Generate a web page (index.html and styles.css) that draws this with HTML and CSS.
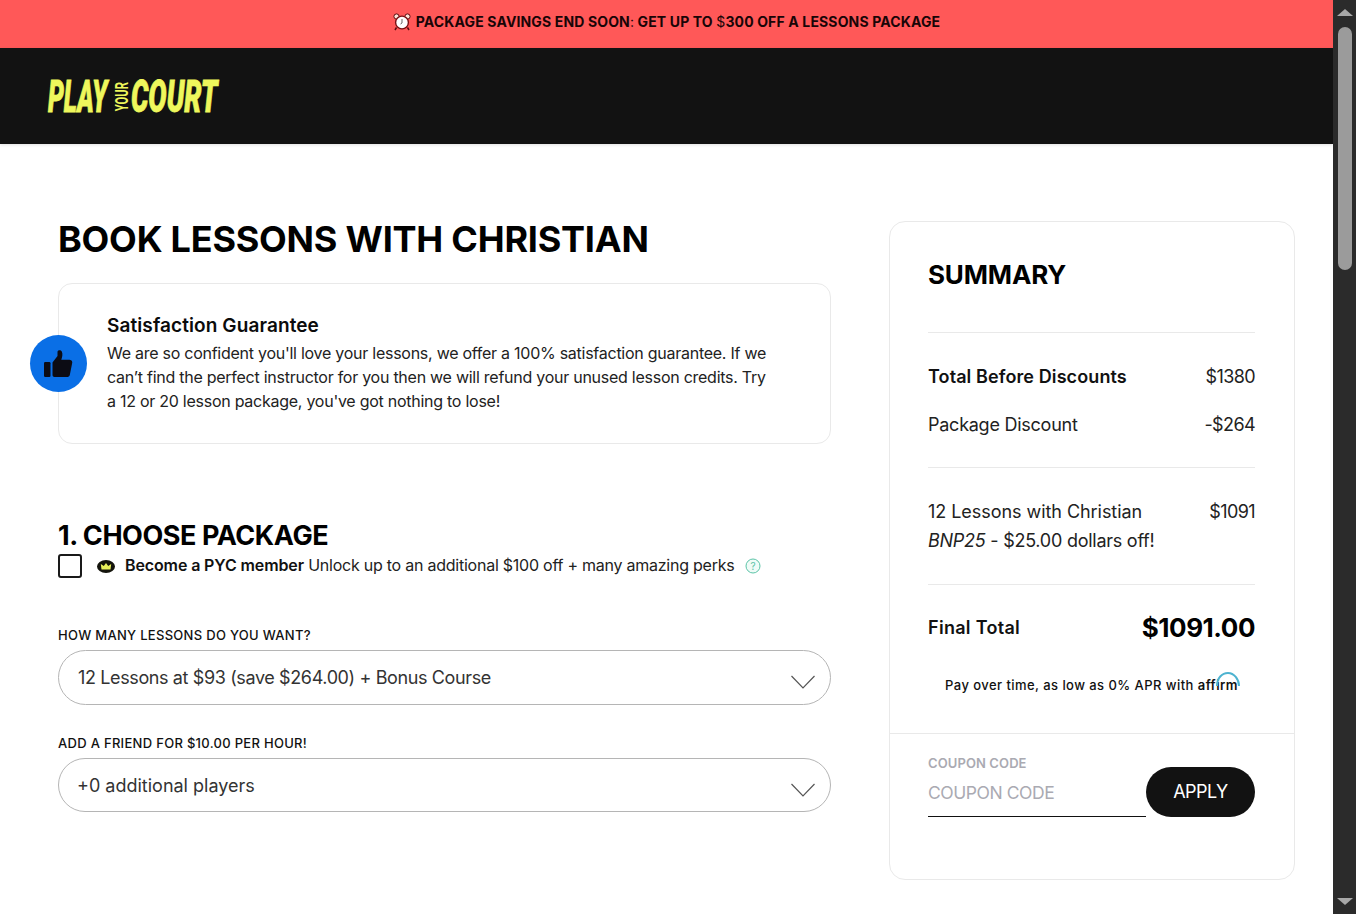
FILE: index.html
```html
<!DOCTYPE html>
<html lang="en">
<head>
<meta charset="utf-8">
<title>Book Lessons</title>
<link rel="stylesheet" href="styles.css">
</head>
<body>
<div class="shell">
  <div class="page">
    <div class="promo">
      <svg class="clock" viewBox="0 0 18 18" width="18" height="18"><circle cx="3.5" cy="3.5" r="2.6" fill="#fbe3d8" stroke="#5a0d10"/><circle cx="14.5" cy="3.5" r="2.6" fill="#fbe3d8" stroke="#5a0d10"/><path d="M3.5 14.5 2 17M14.5 14.5 16 17" stroke="#5a0d10" stroke-width="1.5"/><circle cx="9" cy="9.5" r="6.4" fill="#fff" stroke="#7a1014" stroke-width="1.4"/><path d="M9 6v4l-1.5 1" fill="none" stroke="#555" stroke-width=".9"/></svg>
      <span>PACKAGE SAVINGS END SOON<span class="thin">:</span> GET UP TO <span class="thin">$</span>300 OFF A LESSONS PACKAGE</span>
    </div>
    <header class="topbar">
      <div class="logo"><span class="logo-word play">PLAY</span><span class="logo-your">YOUR</span><span class="logo-word court">COURT</span></div>
    </header>
    <main class="content">
      <section class="left">
        <h1 class="title">BOOK LESSONS WITH CHRISTIAN</h1>
        <div class="guarantee">
          <div class="thumb">
            <svg viewBox="0 0 30 30" width="30" height="30"><rect x="1" y="13" width="6.5" height="15" rx="1.2" fill="#0c0c14"/><path d="M9.500 13.500 14.500 7V2.800C14.500 1 17.800.6 18.800 2.600 20 5 19.200 8.500 18.300 10.800H26.500C29 10.800 29.800 13 29 15L26.800 26C26.400 27.500 25.300 28 24 28H11.500C10.300 28 9.500 27.200 9.500 26Z" fill="#0c0c14"/></svg>
          </div>
          <h3 class="g-title">Satisfaction Guarantee</h3>
          <p class="g-text">We are so confident you'll love your lessons, we offer a 100% satisfaction guarantee. If we<br>can’t find the perfect instructor for you then we will refund your unused lesson credits. Try<br>a 12 or 20 lesson package, you've got nothing to lose!</p>
        </div>
        <h2 class="step">1. CHOOSE PACKAGE</h2>
        <div class="member">
          <span class="check"></span>
          <svg class="crown" viewBox="0 0 18 13" width="18" height="13"><ellipse cx="9" cy="6.500" rx="9" ry="6.500" fill="#14140c"/><path d="M4.500 9.500 3.800 4 6.800 6 9 3 11.200 6 14.200 4 13.500 9.500Z" fill="#e8f05a"/></svg>
          <span class="member-text"><b>Become a PYC member</b> Unlock up to an additional $100 off + many amazing perks</span>
          <svg class="help" viewBox="0 0 16 16" width="16" height="16"><circle cx="8" cy="8" r="7" fill="#effbf7" stroke="#5cc4a8" stroke-width="1"/><text x="8" y="11.500" text-anchor="middle" class="help-q">?</text></svg>
        </div>
        <label class="field-label first">HOW MANY LESSONS DO YOU WANT?</label>
        <div class="select tall">
          <span>12 Lessons at $93 (save $264.00) + Bonus Course</span>
          <svg class="chev" viewBox="0 0 24 14" width="24" height="14"><path d="M.5 1 12 13 23.500 1" fill="none" stroke="#555" stroke-width="1.2"/></svg>
        </div>
        <label class="field-label second">ADD A FRIEND FOR $10.00 PER HOUR!</label>
        <div class="select short">
          <span>+0 additional players</span>
          <svg class="chev" viewBox="0 0 24 14" width="24" height="14"><path d="M.5 1 12 13 23.500 1" fill="none" stroke="#555" stroke-width="1.2"/></svg>
        </div>
      </section>
      <aside class="summary">
        <div class="sum-body">
          <h2 class="sum-title">SUMMARY</h2>
          <div class="sum-group g1">
            <div class="row strong"><span>Total Before Discounts</span><span class="val">$1380</span></div>
            <div class="row tight"><span>Package Discount</span><span class="val">-$264</span></div>
          </div>
          <div class="sum-group g2">
            <div class="row"><span>12 Lessons with Christian</span><span class="val">$1091</span></div>
            <div class="row tight"><span><i>BNP25</i> - $25.00 dollars off!</span></div>
          </div>
          <div class="final"><span class="final-label">Final Total</span><span class="final-val">$1091.00</span></div>
          <p class="affirm">Pay over time, as low as 0% APR with <span class="affirm-mark">affirm<svg viewBox="0 0 24 16" width="24" height="16"><path d="M1 15C1 7 6 2 12 2s11 6 11 13" fill="none" stroke="#4db3d0" stroke-width="2"/></svg></span></p>
        </div>
        <div class="coupon">
          <div class="coupon-field">
            <div class="coupon-label">COUPON CODE</div>
            <div class="coupon-input">COUPON CODE</div>
          </div>
          <button class="apply">APPLY</button>
        </div>
      </aside>
    </main>
  </div>
  <div class="scrollbar">
    <span class="arrow up"></span>
    <div class="track"><div class="thumb-bar"></div></div>
    <span class="arrow down"></span>
  </div>
</div>
</body>
</html>
```
FILE: styles.css
```css
* { box-sizing: border-box; }
html, body { margin: 0; padding: 0; height: 914px; overflow: hidden; background: #fff; }
body { font-family: Inter, "Liberation Sans", sans-serif; color: #111; }
.shell { display: flex; height: 914px; }
.page { flex: 1; min-width: 0; }
.promo { height: 48px; background: #ff5858; display: flex; align-items: center; justify-content: center; gap: 5px; padding-bottom: 5px; font-size: 14px; font-weight: 700; color: #190507; letter-spacing: 0.14px; }
.thin { font-weight: 400; }
.clock { flex: none; }
.topbar { height: 96px; background: #121212; display: flex; align-items: center; padding-left: 48px; box-shadow: 0 1px 3px rgba(0,0,0,.12); }
.logo { display: flex; align-items: center; color: #eef75c; height: 34px; margin-top: 1px; }
.logo-word { font-family: Roboto, sans-serif; font-weight: 900; font-style: italic; font-size: 44px; line-height: 34px; display: inline-block; transform-origin: left center; white-space: nowrap; -webkit-text-stroke: 0.8px #eef75c; }
.play { width: 65px; transform: scaleX(.57); }
.court { width: 91px; transform: scaleX(.62); }
.logo-your { writing-mode: vertical-rl; transform: rotate(180deg) scaleY(.59); font-family: Roboto, sans-serif; font-weight: 700; font-size: 19px; line-height: 18px; width: 18px; text-align: center; }
.content { display: flex; justify-content: space-between; padding: 77px 38px 0 58px; }
.left { width: 773px; }
.title { margin: 0; font-size: 36px; line-height: 36px; font-weight: 700; letter-spacing: -0.22px; color: #000; }
.guarantee { position: relative; margin-top: 26px; height: 161px; border: 1px solid #e9e9e9; border-radius: 14px; padding: 30px 0 0 48px; }
.thumb { position: absolute; left: -29px; top: 51px; width: 57px; height: 57px; border-radius: 50%; background: #0a6fe6; display: flex; align-items: center; justify-content: center; padding-right: 2px; }
.g-title { margin: 0; font-size: 19px; line-height: 24px; font-weight: 600; letter-spacing: 0.1px; color: #0b0b0b; }
.g-text { margin: 3px 0 0; font-size: 16px; line-height: 24px; color: #222; white-space: nowrap; letter-spacing: -0.26px; }
.step { margin: 77px 0 0; font-size: 27px; line-height: 30px; font-weight: 700; color: #000; letter-spacing: -0.45px; }
.member { display: flex; align-items: center; margin-top: 3px; height: 24px; font-size: 16px; }
.check { width: 24px; height: 24px; border: 2px solid #1a1a1a; border-radius: 3px; flex: none; }
.crown { margin-left: 15px; flex: none; }
.member-text { margin-left: 10px; padding-bottom: 2px; color: #222; white-space: nowrap; letter-spacing: -0.24px; }
.member-text b { font-weight: 600; color: #111; letter-spacing: -0.12px; }
.help { margin-left: 11px; flex: none; }
.help-q { font-size: 10px; fill: #5cc4a8; }
.field-label { display: block; font-size: 13px; line-height: 16px; font-weight: 500; color: #111; white-space: nowrap; letter-spacing: 0.3px; }
.field-label.first { margin-top: 49px; }
.field-label.second { margin-top: 30px; }
.select { margin-top: 7px; height: 54px; border: 1px solid #b5b5b5; border-radius: 28px; display: flex; align-items: center; justify-content: space-between; padding: 0 15px 0 19px; font-size: 18px; color: #333; }
.select.tall { height: 55px; letter-spacing: -0.38px; }
.select.short { padding-left: 18px; }
.chev { margin-top: 9px; }
.summary { width: 406px; height: 659px; border: 1px solid #e9e9e9; border-radius: 16px; display: flex; flex-direction: column; }
.sum-body { padding: 0 39px 0 38px; height: 512px; border-bottom: 1px solid #e9e9e9; }
.sum-title { margin: 0; padding-top: 38px; height: 111px; font-size: 26px; line-height: 30px; font-weight: 700; color: #000; border-bottom: 1px solid #e9e9e9; letter-spacing: -0.15px; }
.sum-group { border-bottom: 1px solid #e9e9e9; font-size: 18px; color: #222; }
.g1 { height: 135px; padding-top: 29px; }
.g1 .row { height: 48px; }
.g2 { height: 117px; padding-top: 29px; }
.g2 .row { height: 29px; }
.row { display: flex; justify-content: space-between; line-height: 29px; letter-spacing: -0.05px; }
.row.tight { letter-spacing: -0.25px; }
.row.strong { font-weight: 600; color: #111; letter-spacing: 0.1px; }
.row .val { font-weight: 400; color: #222; letter-spacing: -0.6px; }
.final { display: flex; justify-content: space-between; align-items: center; height: 84px; }
.final-label { font-size: 18px; font-weight: 600; color: #111; letter-spacing: 0.3px; }
.final-val { font-size: 26px; font-weight: 700; color: #000; letter-spacing: -0.45px; }
.affirm { margin: 8px 0 0; font-size: 13px; line-height: 16px; font-weight: 500; text-align: center; color: #111; white-space: nowrap; letter-spacing: 0.44px; }
.affirm-mark { position: relative; display: inline-block; font-weight: 600; }
.affirm-mark svg { position: absolute; right: -2px; top: -6px; }
.coupon { display: flex; align-items: flex-end; padding: 33px 39px 0 38px; }
.coupon-field { width: 218px; height: 50px; border-bottom: 1px solid #111; }
.coupon-label { font-size: 13px; line-height: 16px; font-weight: 600; color: #aaaab2; margin-top: -12px; letter-spacing: 0.1px; }
.coupon-input { font-size: 17.5px; line-height: 30px; color: #aaaab2; margin-top: 7px; letter-spacing: -0.45px; }
.apply { width: 109px; height: 50px; border: 0; border-radius: 25px; padding: 0 0 2px; background: #121212; color: #fff; font: 400 18px Inter, sans-serif; letter-spacing: -0.5px; }
.scrollbar { width: 23px; flex: none; background: #2b2b2b; display: flex; flex-direction: column; align-items: center; padding-top: 9px; }
.arrow { width: 0; height: 0; border-left: 8px solid transparent; border-right: 8px solid transparent; flex: none; }
.arrow.up { border-bottom: 7px solid #a8a8a8; }
.arrow.down { border-top: 7px solid #a8a8a8; margin-bottom: 9px; }
.track { flex: 1; width: 100%; padding: 11px 4px 0; }
.thumb-bar { height: 243px; width: 14px; margin: 0 auto; border-radius: 7px; background: #9b9b9b; }
```
